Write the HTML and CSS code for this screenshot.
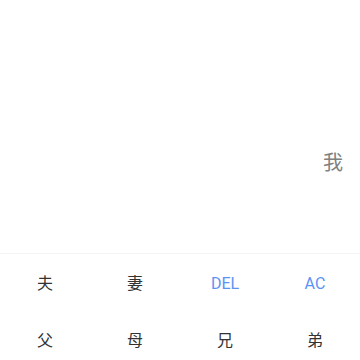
FILE: index.html
```html
<!DOCTYPE html>
<html>
<head>
	<meta charset="UTF-8">
	<meta name="viewport" content="width=device-width, initial-scale=1.0">
	<title>亲戚计算器</title>
	<link rel="stylesheet" href="styles.css">
</head>
<body>
	<div class="screen">
		<div class="expr">我</div>
	</div>
	<div class="keypad">
		<button class="key">夫</button>
		<button class="key">妻</button>
		<button class="key fn">DEL</button>
		<button class="key fn">AC</button>
		<button class="key">父</button>
		<button class="key">母</button>
		<button class="key">兄</button>
		<button class="key">弟</button>
	</div>
</body>
</html>
```
FILE: styles.css
```css
body {
	margin : 0;
	background-color : #fff;
	font-family : Roboto, "Noto Sans CJK SC", sans-serif;
}

.screen {
	height : 254px;
	box-sizing : border-box;
	padding : 149px 17px 0 0;
	border-bottom : 1px solid #f5f5f5;
}

.expr {
	text-align : right;
	font-size : 20px;
	line-height : 28px;
	color : #808080;
}

.keypad {
	display : grid;
	grid-template-columns : repeat(4, 1fr);
	grid-template-rows : 57px 48px;
}

.key {
	align-self : start;
	border : none;
	background : none;
	padding : 19px 0 0;
	font-family : inherit;
	font-size : 16px;
	line-height : 22px;
	color : #333;
}

.key.fn {
	color : #5b93f5;
}
```
